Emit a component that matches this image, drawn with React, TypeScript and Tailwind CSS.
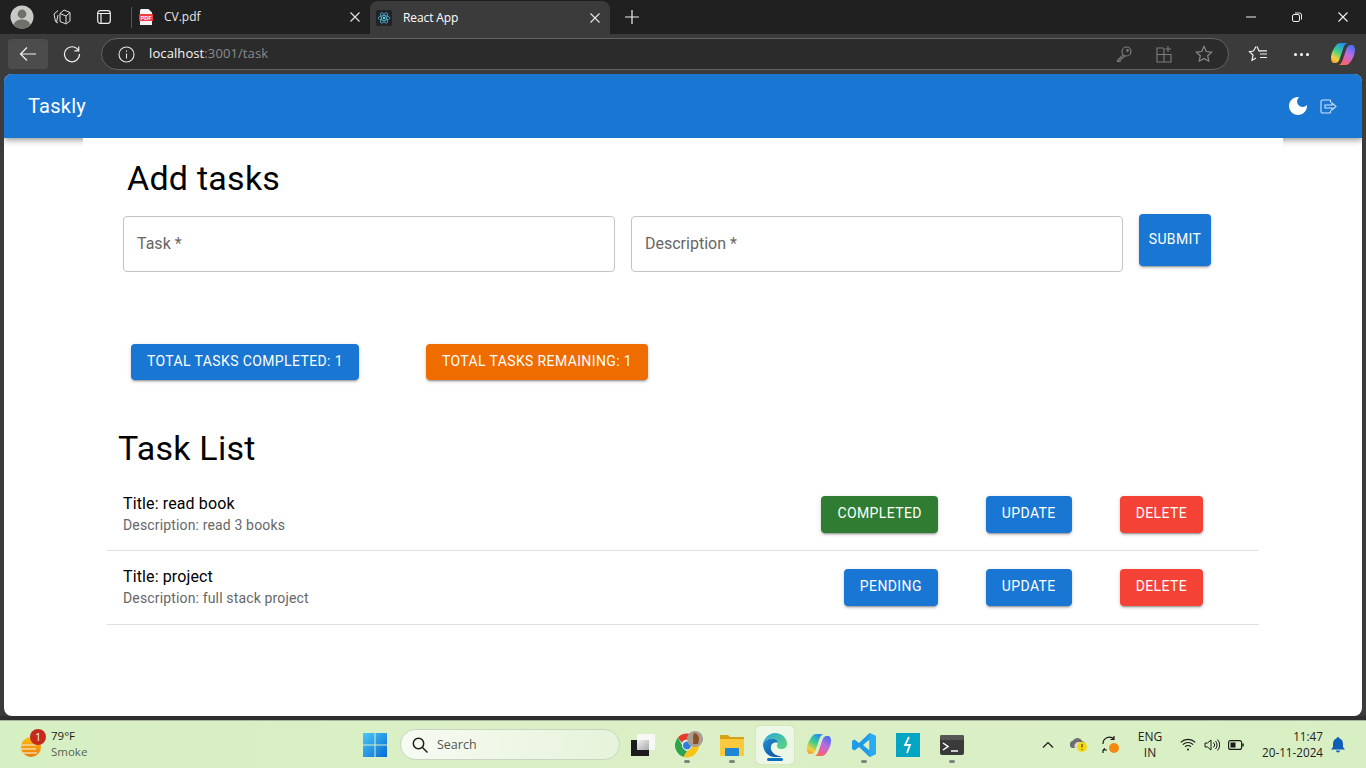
import React from "react";

const Close = ({ c = "#e8e8e8" }: { c?: string }) => (
  <svg width="10" height="10" viewBox="0 0 10 10" fill="none" stroke={c} strokeWidth="1.1"><path d="M.5.5l9 9M9.5.5l-9 9" /></svg>
);

function CopilotGlyph({ id }: { id: string }) {
  return (
    <svg width="24" height="22" viewBox="0 0 24 22">
      <defs>
        <linearGradient id={`${id}a`} x1="0.7" y1="0" x2="0.2" y2="1"><stop offset="0" stopColor="#1f8ff0" /><stop offset=".45" stopColor="#3fd08a" /><stop offset=".8" stopColor="#f6d13b" /><stop offset="1" stopColor="#f59a3a" /></linearGradient>
        <linearGradient id={`${id}b`} x1="0.7" y1="0" x2="0.2" y2="1"><stop offset="0" stopColor="#4a6ff0" /><stop offset=".4" stopColor="#b86be6" /><stop offset=".8" stopColor="#f0608a" /><stop offset="1" stopColor="#f5763a" /></linearGradient>
      </defs>
      <path d="M9 0h7c-2 1-3 3-4 6l-3 9c-1 3-2 5-5 5H3C1 20 0 18 0 15 0 10 3 5 5 2.500 6 1 7.500 0 9 0z" fill={`url(#${id}a)`} />
      <path d="M15 22H8c2-1 3-3 4-6l3-9c1-3 2-5 5-5h1c2 0 3 2 3 5 0 5-3 10-5 12.500-1 1.500-2.500 2.500-4 2.500z" fill={`url(#${id}b)`} />
    </svg>
  );
}

function ChromeBar() {
  return (
    <div className="h-[34px] bg-[#202020] flex items-center shrink-0 text-[12px] text-[#e6e6e6] font-['Open_Sans',sans-serif]">
      <div className="w-[131px] flex items-center shrink-0">
        <svg className="ml-[8px]" width="28" height="28" viewBox="0 0 28 28">
          <circle cx="14" cy="14" r="11.5" fill="#c9c9c5" />
          <circle cx="14" cy="11" r="4.4" fill="#6f6f6c" />
          <path d="M5.5 21.5c2-4 5-5 8.500-5s6.500 1 8.500 5A11.500 11.500 0 0 1 14 25.500 11.500 11.500 0 0 1 5.500 21.500z" fill="#6f6f6c" />
        </svg>
        <svg className="ml-[17px]" width="18" height="18" viewBox="0 0 18 18" fill="none" stroke="#e0e0e0" strokeWidth="1"><path d="M7 5.500l4-3.500 6 2.500v8.500l-4 3-6-2.500z" /><path d="M7 5.500L13 8v7.500M13 8l4-3.500" /><path d="M5 15l-2.500-1.500L1 6l4-3.500M3.500 14L5 7" /></svg>
        <svg className="ml-[26px]" width="14" height="14" viewBox="0 0 14 14" fill="none" stroke="#f0f0f0" strokeWidth="1.2"><rect x=".7" y=".7" width="12.600" height="12.600" rx="2.500" /><path d="M.7 3.500h12.600M4 3.500v9.800" /></svg>
      </div>
      <div className="w-[239px] h-[34px] flex items-center relative shrink-0">
        <span className="w-px h-[21px] bg-[#555]" />
        <svg className="ml-[7px]" width="14" height="16" viewBox="0 0 14 16">
          <path d="M2.500 0h7L13 3.500V16H1V1.500A1.500 1.500 0 0 1 2.500 0z" fill="#f5f5f5" />
          <rect y="5" width="14" height="7" rx=".5" fill="#f23b3b" />
          <text x="7" y="10.500" textAnchor="middle" fontSize="5.500" fontWeight="700" fill="#fff" fontFamily="Liberation Sans, sans-serif">PDF</text>
        </svg>
        <span className="ml-[11px]">CV.pdf</span>
        <span className="ml-auto mr-[10px]"><Close /></span>
      </div>
      <div className="w-[240px] h-[34px] bg-[#3b3b3b] rounded-t-[8px] flex items-center pl-[6px] shrink-0 mt-[2px]">
        <span className="w-[16px] h-[16px] bg-[#20232a] rounded-[2px] flex items-center justify-center">
          <svg width="14" height="14" viewBox="-12 -12 24 24" fill="none" stroke="#61dafb" strokeWidth="1"><circle r="2" fill="#61dafb" stroke="none" /><ellipse rx="10" ry="4" /><ellipse rx="10" ry="4" transform="rotate(60)" /><ellipse rx="10" ry="4" transform="rotate(120)" /></svg>
        </span>
        <span className="ml-[11px] text-white tracking-[-0.1px]">React App</span>
        <span className="ml-auto mr-[10px]"><Close /></span>
      </div>
      <svg className="ml-[14px]" width="16" height="16" viewBox="0 0 16 16" stroke="#f0f0f0" strokeWidth="1.2"><path d="M8 1v14M1 8h14" /></svg>
      <div className="ml-auto flex items-center">
        <svg className="mr-[36px]" width="10" height="10" viewBox="0 0 10 10" stroke="#eee" strokeWidth="1"><path d="M0 5h10" /></svg>
        <svg className="mr-[36px]" width="10" height="10" viewBox="0 0 10 10" fill="none" stroke="#eee" strokeWidth="1"><rect x=".5" y="2.500" width="7" height="7" rx="1.500" /><path d="M3 1h4.500A2 2 0 0 1 9.500 3v4.500" /></svg>
        <span className="mr-[18px]"><Close c="#f2f2f2" /></span>
      </div>
    </div>
  );
}

function Toolbar() {
  return (
    <div className="h-[40px] bg-[#3b3b3b] flex items-center shrink-0 pl-[8px] font-['Open_Sans',sans-serif]">
      <div className="w-[40px] h-[30px] rounded-[4px] bg-[#4c4c4c] flex items-center justify-center shrink-0">
        <svg width="18" height="16" viewBox="0 0 18 16" fill="none" stroke="#f2f2f2" strokeWidth="1.200"><path d="M17 8H1.500M8 1.500L1.500 8 8 14.500" /></svg>
      </div>
      <svg className="ml-[15px] shrink-0" width="18" height="18" viewBox="0 0 18 18" fill="none" stroke="#eee" strokeWidth="1.200"><path d="M15.500 5.500A7.500 7.500 0 1 0 16.500 9" /><path d="M15.700 1.500v4.300h-4.300" /></svg>
      <div className="ml-[20px] w-[1128px] h-[32px] rounded-full bg-[#2b2b2b] border border-[#636363] flex items-center pl-[16px] pr-[15px] shrink-0">
        <svg width="17" height="17" viewBox="0 0 17 17" fill="none" stroke="#e6e6e6" strokeWidth="1.100"><circle cx="8.500" cy="8.500" r="7.500" /><path d="M8.500 7.500v5M8.500 4.500v1.300" /></svg>
        <span className="ml-[14px] text-[13px] tracking-[0.1px] text-[#f5f5f5]">localhost<span className="text-[#8c8c8c]">:3001/task</span></span>
        <div className="ml-auto flex items-center gap-[22px]">
          <svg width="18" height="18" viewBox="0 0 18 18" fill="none" stroke="#7d7d7d" strokeWidth="1.200"><circle cx="11.500" cy="6.500" r="4.500" /><path d="M8.300 9.700L2.500 15.500v1h2.500v-1.500l5-4" /><circle cx="12.500" cy="5.500" r=".8" /></svg>
          <svg width="18" height="18" viewBox="0 0 18 18" fill="none" stroke="#7d7d7d" strokeWidth="1.100"><path d="M8.500 3H2v14h14V9.500H2M9 9.500V17M9 3v6.500" /><path d="M13 1v6M10.500 4h5.500" /></svg>
          <svg width="18" height="18" viewBox="0 0 18 18" fill="none" stroke="#8a8a8a" strokeWidth="1.200"><path d="M9 1.500l2.300 5 5.400.6-4 3.700 1.100 5.400L9 13.500l-4.800 2.700 1.100-5.400-4-3.700 5.400-.6z" /></svg>
        </div>
      </div>
      <svg className="ml-[19px] shrink-0" width="20" height="18" viewBox="0 0 20 18" fill="none" stroke="#f2f2f2" strokeWidth="1.200"><path d="M9 1.500l2 4.500 1.500.2M5.500 6l-4 .6 3.500 3.400-1 5.300 4-2.300M5.500 6L8 1.500M12 9h7M12 12.500h7M11 5.800h8" /></svg>
      <div className="ml-[26px] flex gap-[3px] shrink-0"><span className="w-[3px] h-[3px] rounded-full bg-white" /><span className="w-[3px] h-[3px] rounded-full bg-white" /><span className="w-[3px] h-[3px] rounded-full bg-white" /></div>
      <div className="ml-[22px] shrink-0 flex"><CopilotGlyph id="tb" /></div>
    </div>
  );
}

const shadow = "shadow-[0_3px_1px_-2px_rgba(0,0,0,0.2),0_2px_2px_0_rgba(0,0,0,0.14),0_1px_5px_0_rgba(0,0,0,0.12)]";

function Btn({ children, bg, className = "" }: { children: React.ReactNode; bg: string; className?: string }) {
  return (
    <button className={`h-[36.5px] pb-[1px] px-[16px] rounded-[4px] text-white text-[14px] font-normal uppercase tracking-[0.38px] ${shadow} ${bg} ${className}`}>
      {children}
    </button>
  );
}

function Field({ label }: { label: string }) {
  return (
    <div className="w-[492px] h-[56px] mt-[2px] border border-[#c4c4c4] rounded-[4px] pl-[13px] pt-[15px] text-[16px] leading-[24px] text-[#666666]">
      {label} *
    </div>
  );
}

function Row({ title, desc, status, statusBg, pad }: { title: string; desc: string; status: string; statusBg: string; pad: string }) {
  return (
    <div className={`h-[74px] border-b border-[#e0e0e0] flex px-[16px] ${pad}`}>
      <div>
        <div className="text-[16px] leading-[24px] tracking-[0.12px] text-black">Title: {title}</div>
        <div className="text-[14px] leading-[19px] tracking-[0.15px] text-[#666666]">Description: {desc}</div>
      </div>
      <div className="ml-auto mr-[40px] flex gap-[48px] items-start mt-[4px]">
        <Btn bg={statusBg}>{status}</Btn>
        <Btn bg="bg-[#1976d2]">Update</Btn>
        <Btn bg="bg-[#f44336]">Delete</Btn>
      </div>
    </div>
  );
}

function Page() {
  return (
    <div className="mx-[4px] h-[642px] bg-white rounded-[8px] overflow-hidden flex flex-col shrink-0 font-['Roboto',sans-serif]">
      <div className="h-[64px] shrink-0 bg-[#1976d2] flex items-center pl-[24px] pr-[25px] shadow-[0_2px_4px_-1px_rgba(0,0,0,0.2),0_4px_5px_0_rgba(0,0,0,0.14),0_1px_10px_0_rgba(0,0,0,0.12)]">
        <span className="text-white text-[20px] font-normal tracking-[0.25px]">Taskly</span>
        <svg className="ml-auto" width="24" height="24" viewBox="0 0 24 24" fill="#fff"><path d="M12 3c-4.970 0-9 4.030-9 9s4.030 9 9 9 9-4.030 9-9c0-.460-.040-.920-.100-1.360-.980 1.370-2.580 2.260-4.400 2.260-2.980 0-5.400-2.420-5.400-5.400 0-1.810.890-3.420 2.260-4.400-.440-.060-.900-.100-1.360-.100z" /></svg>
        <svg className="ml-[10px]" width="17" height="15" viewBox="0 0 17 15" fill="none" stroke="#d3e5f8" strokeWidth="1.100"><path d="M10.500 1H2.500A1.500 1.500 0 0 0 1 2.500v10A1.500 1.500 0 0 0 2.500 14h8" /><path d="M10.500 1v2.500M10.500 11.500V14" /><path d="M5 6h7V4l4 3.500-4 3.500V9H5z" /></svg>
      </div>
      <div className="w-[1200px] mx-auto bg-white relative z-10 flex-1">
        <h4 className="pl-[44px] pt-[19px] text-[34px] leading-[42px] tracking-[0.25px] text-black">Add tasks</h4>
        <div className="mt-[15px] ml-[40px] flex gap-[16px] items-start">
          <Field label="Task" />
          <Field label="Description" />
          <button className={`w-[72px] h-[52px] rounded-[4px] bg-[#1976d2] text-white text-[14px] font-normal uppercase tracking-[0.38px] pb-[1px] ${shadow}`}>Submit</button>
        </div>
        <div className="mt-[72px] ml-[48px] flex gap-[67px]">
          <Btn bg="bg-[#1976d2]" className="!h-[36px]">Total Tasks Completed: 1</Btn>
          <Btn bg="bg-[#ef6c00]" className="!h-[36px]">Total Tasks Remaining: 1</Btn>
        </div>
        <h4 className="mt-[47px] ml-[35px] text-[34px] leading-[42px] tracking-[0.25px] text-black">Task List</h4>
        <div className="ml-[24px] w-[1152px] mt-[8px]">
          <Row title="read book" desc="read 3 books" status="Completed" statusBg="bg-[#2e7d32]" pad="pt-[15px]" />
          <Row title="project" desc="full stack project" status="Pending" statusBg="bg-[#1976d2]" pad="pt-[14px]" />
        </div>
      </div>
    </div>
  );
}

const Dot = () => <span className="w-[6px] h-[3px] rounded-full bg-[#7d857a] mt-[3px]" />;

function TaskIcon({ children, active, dot, w = 44 }: { children: React.ReactNode; active?: boolean; dot?: boolean; w?: number }) {
  return (
    <div style={{ width: w }} className="h-[48px] flex justify-center shrink-0">
      <div className={`w-[38px] h-[38px] mt-[5px] rounded-[4px] flex flex-col items-center ${active ? "bg-[#edf7e6] shadow-[0_0_1px_rgba(0,0,0,0.3)]" : ""}`}>
        <div className="h-[24px] mt-[7px] flex items-center justify-center relative">{children}</div>
        {active ? <span className="w-[16px] h-[3px] rounded-full bg-[#0b6fc4] mt-[1px]" /> : dot ? <Dot /> : null}
      </div>
    </div>
  );
}

function Taskbar() {
  return (
    <div className="flex-1 min-h-0 border-t border-[#a9b5a2] bg-gradient-to-r from-[#d6efc3] via-[#dcefc6] to-[#d8efc4] flex items-center text-[#1c1c1c] font-['Open_Sans',sans-serif]">
      <div className="w-[363px] shrink-0 h-full flex items-center pl-[19px]">
        <div className="relative w-[32px] h-[32px]">
          <svg className="absolute left-0 top-[7px]" width="24" height="22" viewBox="0 0 24 22">
            <defs><linearGradient id="sun" x1="0" y1="0" x2="0" y2="1"><stop offset="0" stopColor="#fbbf14" /><stop offset="1" stopColor="#f07a05" /></linearGradient></defs>
            <circle cx="12" cy="11" r="10" fill="url(#sun)" />
            <path d="M2 9h15M0 13h17M4 17h14" stroke="#f2d9a0" strokeWidth="1.400" />
          </svg>
          <span className="absolute left-[11px] top-0 w-[16px] h-[16px] rounded-full bg-[#c42b1c] text-white text-[10px] leading-[16px] text-center">1</span>
        </div>
        <div className="text-[11.5px] leading-[16px] mb-[2px]">
          <div>79°F</div>
          <div className="text-[#5a6356]">Smoke</div>
        </div>
      </div>
      <svg width="24" height="24" viewBox="0 0 24 24" className="shrink-0">
        <defs><linearGradient id="win" x1="0" y1="0" x2="1" y2="1"><stop offset="0" stopColor="#4cc8f6" /><stop offset="1" stopColor="#0669d6" /></linearGradient></defs>
        <path d="M0 0h11.500v11.500H0zM12.500 0H24v11.500H12.500zM0 12.500h11.500V24H0zM12.500 12.500H24V24H12.500z" fill="url(#win)" />
      </svg>
      <div className="ml-[13px] w-[220px] h-[31px] rounded-full bg-gradient-to-r from-[#f7fbf3] to-[#e6f3da] border border-[#c9d6bf] flex items-center pl-[11px] shrink-0">
        <svg width="16" height="16" viewBox="0 0 16 16" fill="none" stroke="#1a1a1a" strokeWidth="1.500"><circle cx="6.500" cy="6.500" r="5.200" /><path d="M10.500 10.500l5 5" /></svg>
        <span className="ml-[9px] text-[12.5px] pt-[1px] text-[#555]">Search</span>
      </div>
      <div className="ml-[1px] flex items-start h-full">
        <TaskIcon w={43}>
          <svg width="24" height="22" viewBox="0 0 24 22">
            <defs><linearGradient id="tv" x1="0" y1="0" x2="1" y2="1"><stop offset="0" stopColor="#f2f2f2" /><stop offset="1" stopColor="#a8a8a8" /></linearGradient></defs>
            <rect x="0" y="6" width="18" height="16" fill="#1c1c1c" />
            <rect x="6" y="0" width="18" height="16" rx="1" fill="#f7f9f4" />
            <rect x="6" y="6" width="12" height="10" fill="url(#tv)" />
          </svg>
        </TaskIcon>
        <TaskIcon w={46} dot>
          <svg className="ml-[6px]" width="30" height="28" viewBox="0 0 30 28">
            <path d="M12 2.500a12 12 0 0 1 10.400 6H12a5.500 5.500 0 0 0-5 3.200L2.800 6.700A12 12 0 0 1 12 2.500z" fill="#e33b2e" />
            <path d="M2.800 6.700L8 15.500A5.500 5.500 0 0 0 12 20l-3.400 5.900A12 12 0 0 1 2.800 6.700z" fill="#2ea44f" />
            <path d="M22.400 8.500A12 12 0 0 1 8.600 25.900L14 17a5.500 5.500 0 0 0 2-8.500z" fill="#f7c518" />
            <circle cx="12" cy="14.500" r="4.500" fill="#2f7de1" stroke="#fff" strokeWidth="1" />
            <circle cx="20" cy="8" r="8" fill="#a99c90" /><path d="M19 2c3 0 5 3 5 6 0 2-1 3-1 5h-5c1-3-1-7 1-11z" fill="#8a4f22" />
          </svg>
        </TaskIcon>
        <TaskIcon w={43} dot>
          <svg width="24" height="22" viewBox="0 0 24 22"><path d="M0 2a1 1 0 0 1 1-1h7l2 2h13a1 1 0 0 1 1 1v3H0z" fill="#d89f12" /><rect y="5" width="24" height="17" rx="1" fill="#fbc93d" /><rect x="5" y="14" width="14" height="8" rx="1" fill="#1b87d6" /></svg>
        </TaskIcon>
        <TaskIcon w={43} active>
          <svg width="24" height="24" viewBox="0 0 24 24">
            <defs>
              <linearGradient id="eg" x1="0" y1="0" x2="1" y2="1"><stop offset="0" stopColor="#27a8d8" /><stop offset="1" stopColor="#5fd67a" /></linearGradient>
              <linearGradient id="eb" x1="0" y1="0" x2="1" y2="1"><stop offset="0" stopColor="#1f8fd8" /><stop offset="1" stopColor="#0c4a98" /></linearGradient>
            </defs>
            <path d="M12 0C19 0 24 5 24 11c0 3-2.500 5-5.500 5S14 15 14 13c0-1 .8-2 .8-3C14.800 7 12 5.500 9 5.500 5 5.500 1 8 0 11 1 5 6 0 12 0z" fill="url(#eg)" />
            <path d="M0 11c1-3 5-5.500 9-5.500 3 0 5.800 1.500 5.800 4.500-3-1.500-7 .5-7 4.500 0 4 3.500 8 9 8.500 1 0 2 0 3-.5A12 12 0 0 1 12 24C5 24 0 18 0 11z" fill="url(#eb)" />
          </svg>
        </TaskIcon>
        <TaskIcon w={46}><CopilotGlyph id="tk" /></TaskIcon>
        <TaskIcon w={43} dot>
          <svg width="24" height="24" viewBox="0 0 24 24"><path d="M17.500 0L24 3v18l-6.500 3L7 14l-4.500 3.500L0 16V8l2.500-1.500L7 10zM17.500 6.500L11 12l6.500 5.500z" fill="#1f9be8" /><path d="M17.500 0L24 3v18l-6.500 3z" fill="#2aabf0" /></svg>
        </TaskIcon>
        <TaskIcon w={45}>
          <svg width="24" height="24" viewBox="0 0 24 24"><rect width="24" height="24" fill="#04a5c2" /><path d="M13 4l-4 8h5l-3 8" fill="none" stroke="#fff" strokeWidth="1.800" /></svg>
        </TaskIcon>
        <TaskIcon w={43} dot>
          <svg width="24" height="20" viewBox="0 0 24 20"><rect width="24" height="20" rx="2" fill="#3a3a3a" /><rect width="24" height="5" rx="2" fill="#555" /><path d="M3 8l5 3.500L3 15" fill="none" stroke="#fff" strokeWidth="1.500" /><path d="M11 16h7" stroke="#fff" strokeWidth="1.500" /></svg>
        </TaskIcon>
      </div>
      <div className="ml-auto flex items-center pr-[21px] text-[12px] text-[#222]">
        <svg width="12" height="7" viewBox="0 0 12 7" fill="none" stroke="#1a1a1a" strokeWidth="1.200"><path d="M1 6.500l5-5 5 5" /></svg>
        <svg className="ml-[16px]" width="18" height="16" viewBox="0 0 18 16"><path d="M2 11a4 4 0 0 1 1-7.500A5 5 0 0 1 12 4a4 4 0 0 1 2 7z" fill="#6e6e6e" /><path d="M5 11a4 4 0 0 1 4-6h3v6z" fill="#d9d9d9" /><circle cx="12" cy="10" r="5" fill="#f4d90b" /><path d="M12 7v3.500M12 12v1" stroke="#222" /></svg>
        <svg className="ml-[14px]" width="18" height="20" viewBox="0 0 18 20" fill="none" stroke="#1a1a1a" strokeWidth="1.200"><path d="M1 9a6.500 6.500 0 0 1 11-5M12 1v3.500H8.500M1 15l2-1.500M1 15v3M1 15h4" /><circle cx="12" cy="13" r="5" fill="#f28a12" stroke="none" /></svg>
        <div className="ml-[7px] w-[46px] text-center leading-[16px] text-[12px]"><div>ENG</div><div>IN</div></div>
        <svg className="ml-[7px]" width="16" height="13" viewBox="0 0 16 13" fill="none" stroke="#1a1a1a" strokeWidth="1.100"><path d="M.7 4.300a10.500 10.500 0 0 1 14.600 0M2.800 6.600a7.500 7.500 0 0 1 10.400 0M5 8.800a4.300 4.300 0 0 1 6 0" /><circle cx="8" cy="11.500" r="1" fill="#1a1a1a" stroke="none" /></svg>
        <svg className="ml-[8px]" width="16" height="14" viewBox="0 0 16 14" fill="none" stroke="#1a1a1a" strokeWidth="1"><path d="M1 5v4h2.500L7 12V2L3.500 5z" /><path d="M9.500 4.500a3.500 3.500 0 0 1 0 5M11.500 3a6 6 0 0 1 0 8M13.500 1.500a8 8 0 0 1 0 11" /></svg>
        <svg className="ml-[8px]" width="16" height="10" viewBox="0 0 16 10" fill="none" stroke="#1a1a1a" strokeWidth="1.100"><rect x=".6" y=".6" width="13" height="8.800" rx="2" /><rect x="2.500" y="2.500" width="5" height="5" fill="#1a1a1a" stroke="none" /><path d="M15 3.500v3" strokeWidth="1.500" /></svg>
        <div className="ml-[9px] w-[70px] text-right leading-[16px] text-[11.7px] mb-[1px]"><div>11:47</div><div>20-11-2024</div></div>
        <svg className="ml-[8px]" width="14" height="16" viewBox="0 0 14 16" fill="#0f5fb8"><path d="M7 0a1.500 1.500 0 0 1 1.500 1.500C11 2.200 12 4.500 12 7v3l2 2.500H0L2 10V7c0-2.500 1-4.800 3.500-5.500A1.500 1.500 0 0 1 7 0z" /><path d="M5 13.500h4a2 2 0 0 1-4 0z" /></svg>
      </div>
    </div>
  );
}

export default function App() {
  return (
    <div className="w-[1366px] h-[768px] overflow-hidden flex flex-col bg-[#3b3b3b]">
      <ChromeBar />
      <Toolbar />
      <Page />
      <div className="h-[4px] shrink-0 bg-[#2f2f2f]" />
      <Taskbar />
    </div>
  );
}
